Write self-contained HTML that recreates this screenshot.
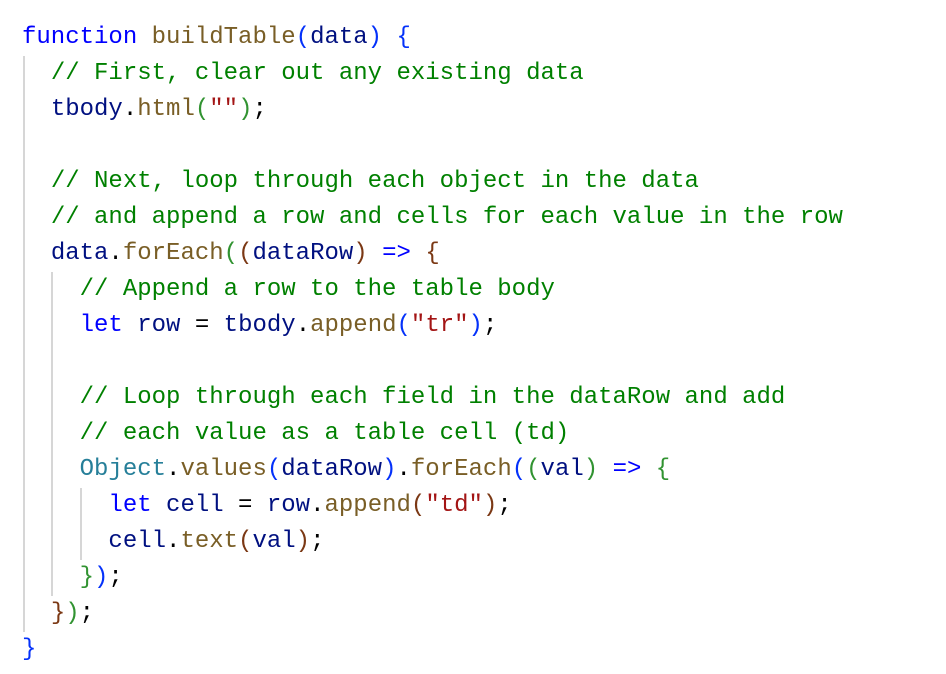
<!DOCTYPE html>
<html><head><meta charset="utf-8"><style>
body{margin:0;background:#fff;width:946px;height:674px;overflow:hidden;position:relative}
pre{position:absolute;left:22px;top:20px;margin:0;font:24px/36px "Liberation Mono",monospace;color:#000}
.k{color:#0000ff}.f{color:#795e26}.v{color:#001080}.c{color:#008000}.s{color:#a31515}.t{color:#267f99}
.b1{color:#0431fa}.b2{color:#319331}.b3{color:#7b3814}
.g{position:absolute;width:2px;background:#d6d6d6}
</style></head><body>
<div class="g" style="left:23px;top:56px;height:576px"></div>
<div class="g" style="left:51px;top:272px;height:324px"></div>
<div class="g" style="left:80px;top:488px;height:72px"></div>
<pre><span class="k">function</span> <span class="f">buildTable</span><span class="b1">(</span><span class="v">data</span><span class="b1">)</span> <span class="b1">{</span>
  <span class="c">// First, clear out any existing data</span>
  <span class="v">tbody</span>.<span class="f">html</span><span class="b2">(</span><span class="s">""</span><span class="b2">)</span>;

  <span class="c">// Next, loop through each object in the data</span>
  <span class="c">// and append a row and cells for each value in the row</span>
  <span class="v">data</span>.<span class="f">forEach</span><span class="b2">(</span><span class="b3">(</span><span class="v">dataRow</span><span class="b3">)</span> <span class="k">=&gt;</span> <span class="b3">{</span>
    <span class="c">// Append a row to the table body</span>
    <span class="k">let</span> <span class="v">row</span> = <span class="v">tbody</span>.<span class="f">append</span><span class="b1">(</span><span class="s">"tr"</span><span class="b1">)</span>;

    <span class="c">// Loop through each field in the dataRow and add</span>
    <span class="c">// each value as a table cell (td)</span>
    <span class="t">Object</span>.<span class="f">values</span><span class="b1">(</span><span class="v">dataRow</span><span class="b1">)</span>.<span class="f">forEach</span><span class="b1">(</span><span class="b2">(</span><span class="v">val</span><span class="b2">)</span> <span class="k">=&gt;</span> <span class="b2">{</span>
      <span class="k">let</span> <span class="v">cell</span> = <span class="v">row</span>.<span class="f">append</span><span class="b3">(</span><span class="s">"td"</span><span class="b3">)</span>;
      <span class="v">cell</span>.<span class="f">text</span><span class="b3">(</span><span class="v">val</span><span class="b3">)</span>;
    <span class="b2">}</span><span class="b1">)</span>;
  <span class="b3">}</span><span class="b2">)</span>;
<span class="b1">}</span></pre>
</body></html>
